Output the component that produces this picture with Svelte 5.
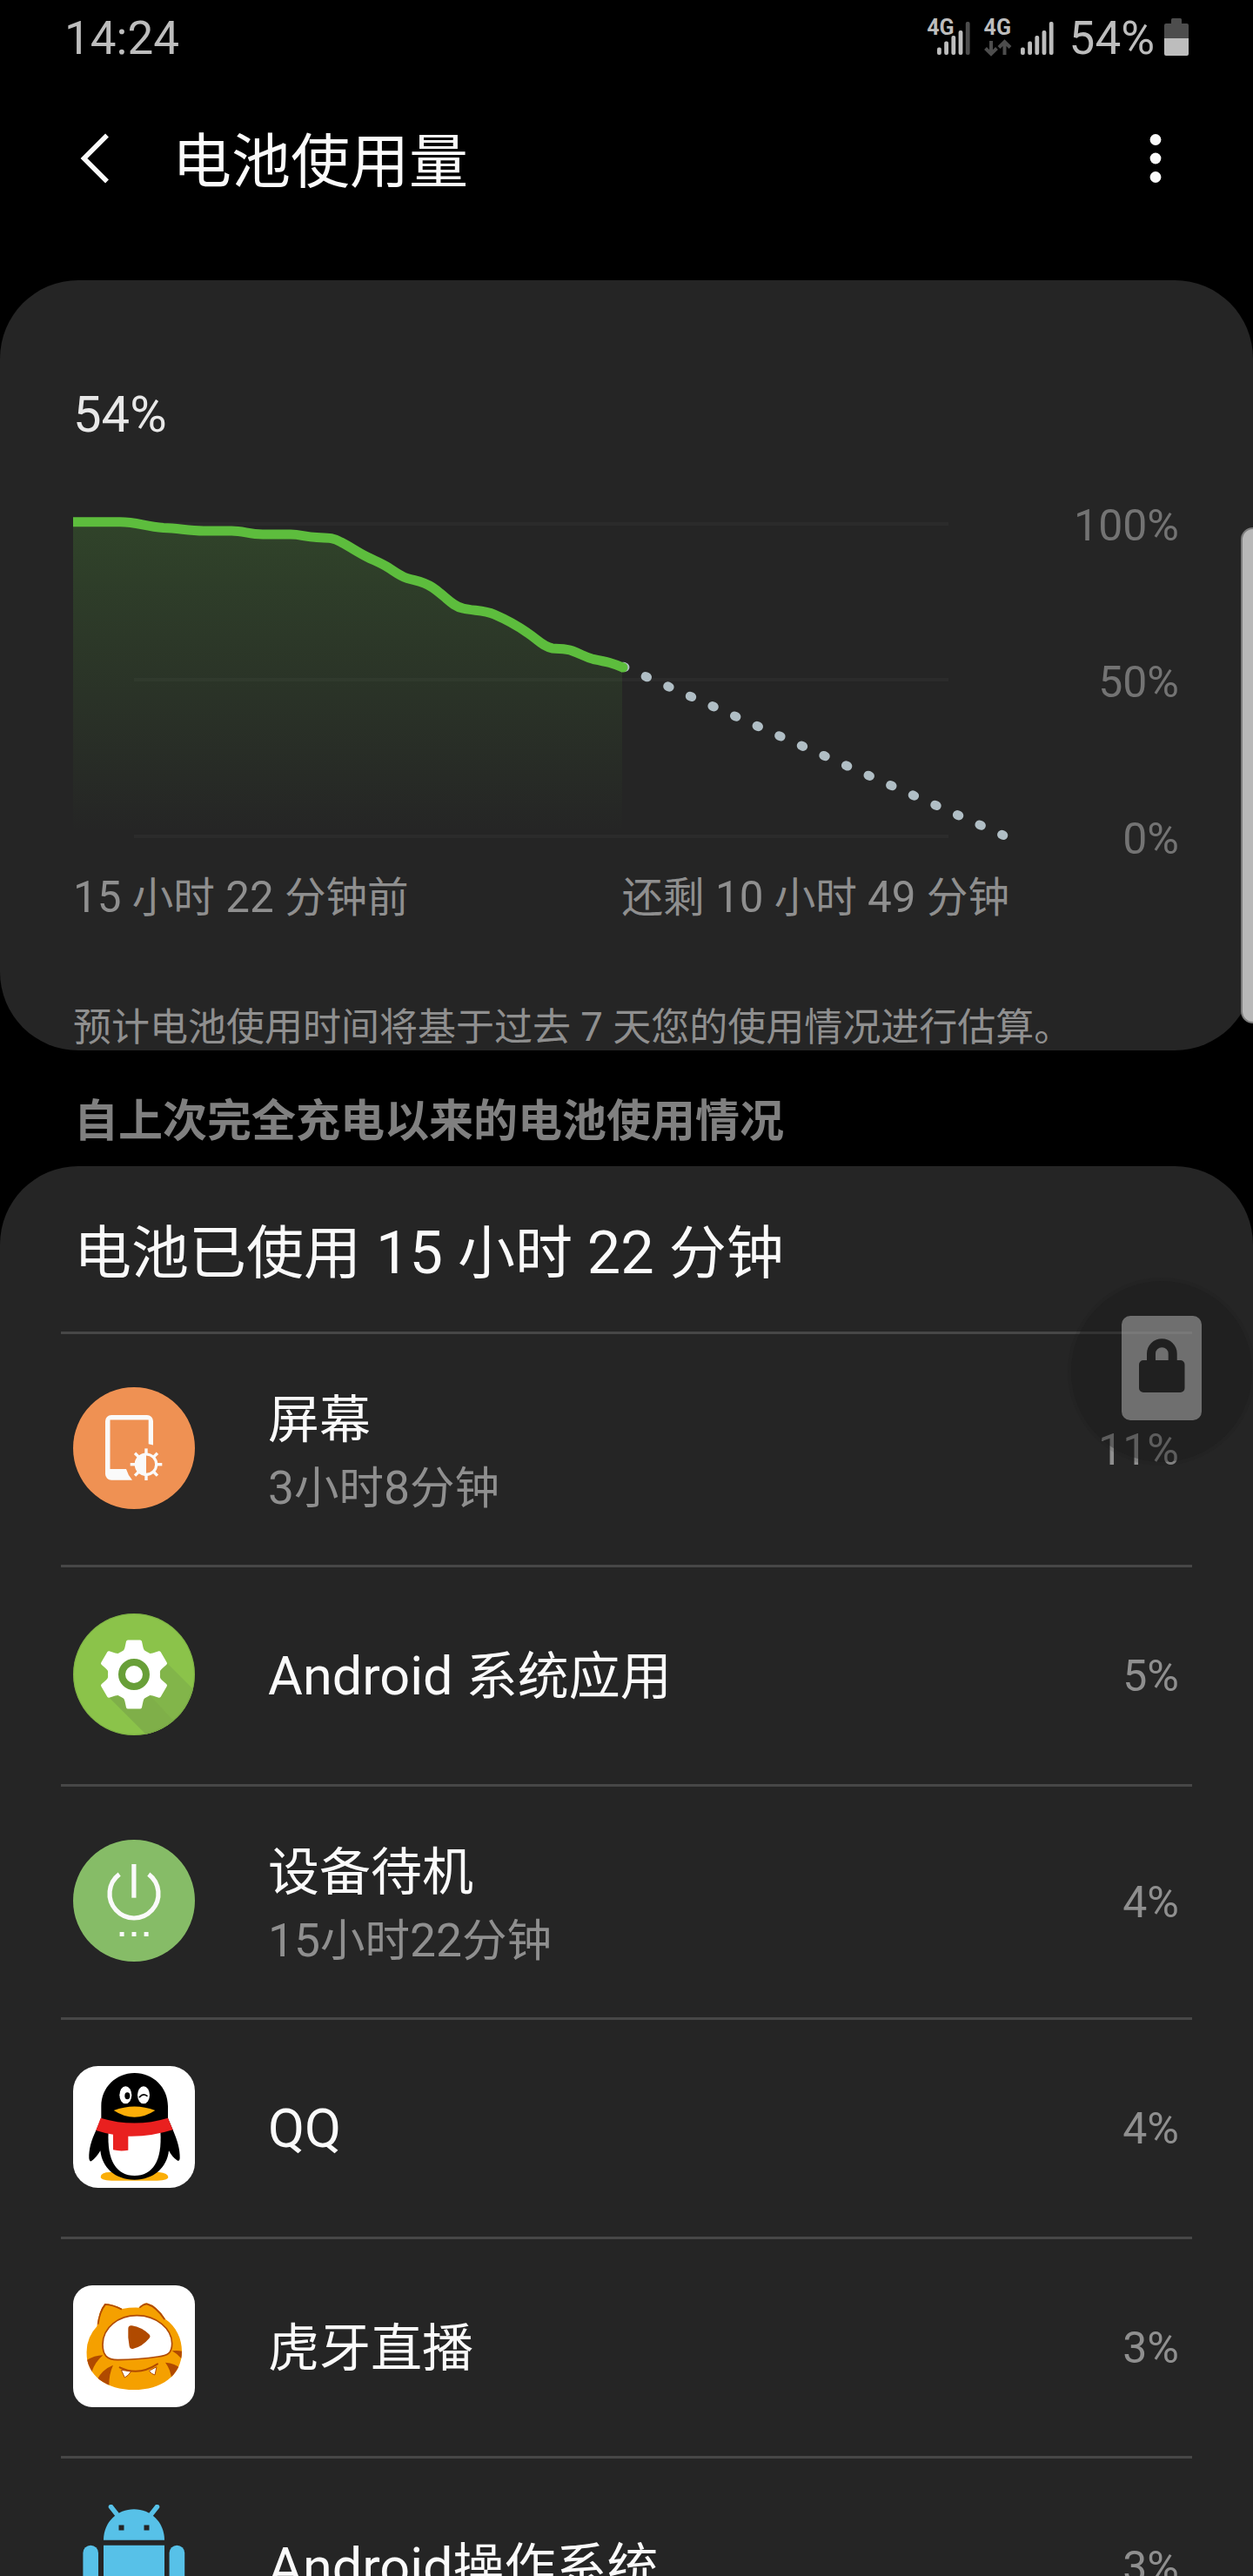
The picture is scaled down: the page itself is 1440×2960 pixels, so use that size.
<script>
  const usage = [
    { icon: 'screen', name: '屏幕', time: '3小时8分钟', percent: '11%' },
    { icon: 'gear', name: 'Android 系统应用', percent: '5%' },
    { icon: 'power', name: '设备待机', time: '15小时22分钟', percent: '4%' },
    { icon: 'qq', name: 'QQ', percent: '4%' },
    { icon: 'huya', name: '虎牙直播', percent: '3%' },
    { icon: 'android', name: 'Android操作系统', percent: '3%' }
  ];

  const curve =
    'M84 599.7 H138 C158 599.7 166 605 188 606.5 C206 607 216 610 234 610 H266 C280 610 286 614 302 614 H334 C346 614 350 617 364 617.5 C378 618 382 617.5 392 623 C402 628 410 634 422 640 C430 644 438 647 446 652 C454 657 460 662 468 664.5 C480 668 486 668 497 675 C512 685 520 697 532 699 C544 702 556 701 568 706 C582 712 596 720 606 727 C618 735 624 743 635 745 C644 746 650 745 658 748 C668 751.5 672 755 682 757.5 C698 760.5 704 762 717 767.5';

  const bars = [8.5, 15.5, 22, 28, 38];
  const teeth = [0, 60, 120, 180, 240, 300];
  const rays = [0, 45, 90, 135, 180, 225, 270, 315];

  // latin runs are set a little larger than the chinese around them
  const split = (text) => text.split(/([ -~]+)/).filter(Boolean);
  const isLatin = (part) => /^[ -~]/.test(part);
</script>

{#snippet mixed(text)}{#each split(text) as part}{#if isLatin(part)}<span class="latin">{part}</span>{:else}{part}{/if}{/each}{/snippet}

{#snippet signal(dimLast)}
  <svg class="signal" width="38" height="40" viewBox="0 0 38 40">
    {#each bars as h, i}
      <rect
        x={i * 8.2}
        y={39 - h}
        width="4.8"
        height={h}
        rx="2"
        fill={dimLast && i === 4 ? '#4d4d4d' : '#bdbdbd'}
      />
    {/each}
  </svg>
{/snippet}

{#snippet appIcon(name)}
  {#if name === 'screen'}
    <svg class="icon" viewBox="0 0 140 140">
      <circle cx="70" cy="70" r="70" fill="#ef9153" />
      <path
        d="M92 66.5 V39 a7 7 0 0 0 -7 -7 H44 a7 7 0 0 0 -7 7 V99.7 a7 7 0 0 0 7 7 H68 Q63 101 61 94 H42.5 V37.5 H86.7 V65.3 Z"
        fill="#fafafa"
      />
      <circle cx="84" cy="88.7" r="11.7" fill="none" stroke="#fafafa" stroke-width="3.2" />
      <path d="M84 76 A12.7 12.7 0 0 0 84 101.4 Z" fill="#fafafa" />
      {#each rays as a}
        <rect x="82.3" y="70.4" width="3.4" height="6.5" fill="#fafafa" transform="rotate({a} 84 88.7)" />
      {/each}
    </svg>
  {:else if name === 'gear'}
    <svg class="icon" viewBox="0 0 140 140">
      <defs>
        <clipPath id="gear-clip"><circle cx="70" cy="70" r="70" /></clipPath>
      </defs>
      <circle cx="70" cy="70" r="70" fill="#8bc34a" />
      <g clip-path="url(#gear-clip)">
        <path d="M41 96 L90 145 H150 V99 L107 56 L70 70 Z" fill="#82b54a" />
        <path d="M41 96 L90 145 H136 L88 94 Z" fill="#7faf49" />
      </g>
      <circle cx="70" cy="70" r="69.3" fill="none" stroke="#6b9a3c" stroke-opacity="0.4" stroke-width="1" />
      <circle cx="70" cy="70" r="30" fill="#fff" />
      {#each teeth as a}
        <path
          d="M53 46 Q58.5 44 59.5 39 L61 32 Q61.5 30.5 63 30.5 H77 Q78.5 30.5 79 32 L80.5 39 Q81.5 44 87 46 L80 56 H60 Z"
          fill="#fff"
          transform="rotate({a} 70 70)"
        />
      {/each}
      <circle cx="70" cy="70" r="14" fill="#fff" stroke="#689f38" stroke-width="8" />
    </svg>
  {:else if name === 'power'}
    <svg class="icon" viewBox="0 0 140 140">
      <circle cx="70" cy="70" r="70" fill="#86bc67" />
      <path d="M53.2 39.6 A28 28 0 1 0 86.8 39.6" fill="none" stroke="#fafafa" stroke-width="5.2" />
      <path d="M67.3 28 h5.2 v38.7 h-5.2 Z" fill="#fafafa" />
      <path d="M53.6 106 h5 v5 h-5 Z M67.5 106 h5 v5 h-5 Z M81.6 106 h5 v5 h-5 Z" fill="#fafafa" />
    </svg>
  {:else if name === 'qq'}
    <svg class="icon" viewBox="42 42 420 420">
      <rect x="42" y="42" width="420" height="420" rx="86" fill="#fff" />
      <path d="M137 425 Q137 408 170 408 H338 Q370 412 370 425 Q368 437 320 437 H185 Q140 437 137 425 Z" fill="#fbae08" />
      <path
        d="M254 66 C190 66 139 116 139 180 V222 L122 262 C104 300 96 330 97 360 Q99 374 106 369 Q122 358 136 334 C142 392 186 434 254 434 C320 434 366 392 372 334 Q384 356 400 367 Q409 374 410 360 C411 330 402 300 386 262 L369 222 V180 C369 116 318 66 254 66 Z"
        fill="#000"
      />
      <path d="M164 268 C158 370 192 420 254 420 C316 420 350 370 343 268 Z" fill="#fff" />
      <path
        d="M137 221 Q254 256 369 221 L386 262 Q310 286 232 284 V332 Q206 337 180 331 V278 Q148 273 121 264 Z"
        fill="#e9201f"
      />
      <ellipse cx="223" cy="142" rx="21" ry="30" fill="#fff" />
      <ellipse cx="285" cy="142" rx="21" ry="30" fill="#fff" />
      <ellipse cx="229" cy="145" rx="9" ry="12" fill="#000" />
      <path d="M271 149 Q283 134 297 145" fill="none" stroke="#000" stroke-width="5" stroke-linecap="round" />
      <path d="M182 195 Q254 168 325 195 Q254 242 182 195 Z" fill="#fbae08" />
    </svg>
  {:else if name === 'huya'}
    <svg class="icon" viewBox="42 48 420 420">
      <defs>
        <clipPath id="huya-face">
          <path
            d="M124 190 Q131 135 151 111 Q180 112 212 129 Q240 124 268 125 Q282 111 296 109 Q330 118 360 164 C398 190 417 232 417 275 C417 360 345 408 252 408 C158 408 88 360 88 278 Q90 225 124 190 Z"
          />
        </clipPath>
      </defs>
      <rect x="42" y="48" width="420" height="420" rx="66" fill="#fff" />
      <g clip-path="url(#huya-face)">
        <rect x="80" y="100" width="345" height="315" fill="#f5a000" />
        <path d="M127 182 Q132 138 153 113 Q178 114 210 130" fill="none" stroke="#b04a00" stroke-width="7" />
        <path d="M270 124 Q282 112 296 111 Q330 121 359 165" fill="none" stroke="#b04a00" stroke-width="8" />
        <path d="M86 307 Q115 290 145 289 Q118 312 107 345 L86 340 Z" fill="#b04a00" />
        <path d="M124 374 Q142 338 180 323 Q165 355 166 395 L130 390 Z" fill="#b04a00" />
        <path d="M383 274 Q405 271 420 276 V306 Q405 286 383 274 Z" fill="#b04a00" />
        <path d="M360 314 Q395 317 412 334 L382 372 Q378 338 360 314 Z" fill="#b04a00" />
      </g>
      <path
        d="M144 252 C144 192 200 152 262 152 C330 152 382 198 383 248 C383 282 368 290 335 294 Q270 304 196 305 C158 305 144 288 144 252 Z"
        fill="#fff"
        stroke="#b04a00"
        stroke-width="5"
      />
      <path d="M232 198 Q232 185 245 187 Q278 192 304 217 Q311 224 304 231 Q280 260 248 267 Q238 268 236 258 Q230 228 232 198 Z" fill="#b04a00" />
      <path d="M208 340 L220 366 Q232 360 242 345 Z M304 343 Q312 354 324 357 L330 329 Z" fill="#fff" stroke="#b04a00" stroke-width="3" />
      <path d="M203 331 Q268 362 333 319" fill="none" stroke="#b04a00" stroke-width="6" stroke-linecap="round" />
    </svg>
  {:else}
    <svg class="icon" viewBox="0 0 140 140">
      <g fill="#57c1e8">
        <path d="M35 40.7 C35 20 51 5.3 70 5.3 C89 5.3 105 20 105 40.7 Z" />
        <path d="M35 46.7 H105 V106 H93 V136 H77 V106 H63 V136 H47 V106 H35 Z" />
        <rect x="11.4" y="46.7" width="17.6" height="56" rx="8.8" />
        <rect x="110.6" y="46.7" width="17.6" height="56" rx="8.8" />
      </g>
      <path d="M43.5 2.5 L51 12 M96.5 2.5 L89 12" stroke="#57c1e8" stroke-width="5.5" stroke-linecap="round" />
      <path d="M52.5 23.5 h6 v6 h-6 Z M81.5 23.5 h6 v6 h-6 Z" fill="#252525" />
    </svg>
  {/if}
{/snippet}

<div class="screen">
  <div class="status">
    <span class="clock">14:24</span>
    <div class="status-right">
      <div class="network overlap">
        <span>4G</span>
        {@render signal(true)}
      </div>
      <div class="network">
        <div class="data">
          <span>4G</span>
          <svg width="32" height="20" viewBox="0 0 32 20" fill="none" stroke="#4d4d4d" stroke-width="4">
            <path d="M8 2 V17 M1.5 10.5 L8 17 L14.5 10.5 M23.5 18 V3 M17 9.5 L23.5 3 L30 9.5" />
          </svg>
        </div>
        {@render signal(false)}
      </div>
      <span class="level">54%</span>
      <svg class="battery" width="28" height="44" viewBox="0 0 28 44">
        <path d="M8 1.5 Q8 0 9.5 0 H18.5 Q20 0 20 1.5 V6 H26 Q28 6 28 8 V23 H0 V8 Q0 6 2 6 H8 Z" fill="#4d4d4d" />
        <path d="M0 23 H28 V41 Q28 43 26 43 H2 Q0 43 0 41 Z" fill="#bdbdbd" />
      </svg>
    </div>
  </div>

  <header>
    <svg class="back" width="34" height="58" viewBox="0 0 34 58">
      <path d="M31 2.5 L4.5 29 L31 55.5" fill="none" stroke="#fafafa" stroke-width="5.5" />
    </svg>
    <h1>电池使用量</h1>
    <svg class="more" width="14" height="58" viewBox="0 0 14 58" fill="#fafafa">
      <circle cx="7" cy="7.5" r="6.4" />
      <circle cx="7" cy="29" r="6.4" />
      <circle cx="7" cy="50.5" r="6.4" />
    </svg>
  </header>

  <section class="card chart-card">
    <p class="current">54%</p>
    <div class="chart">
      <svg width="1080" height="420" viewBox="84 574 1080 420">
        <defs>
          <linearGradient id="fade" x1="0" y1="600" x2="0" y2="958" gradientUnits="userSpaceOnUse">
            <stop offset="0" stop-color="#5dbd3d" stop-opacity="0.2" />
            <stop offset="1" stop-color="#5dbd3d" stop-opacity="0" />
          </linearGradient>
        </defs>
        <path d="M154 600 H1090 V604 H154 Z M154 779 H1090 V783 H154 Z M154 959 H1090 V963 H154 Z" fill="#2b2b2b" />
        <path d="{curve} L715 768 V958 H84 Z" fill="url(#fade)" />
        <path
          d="M715.4 765.5 L1153 959.8"
          fill="none"
          stroke="#b0bec5"
          stroke-width="10.5"
          stroke-linecap="round"
          stroke-dasharray="2 26"
          stroke-dashoffset="-1"
        />
        <path d={curve} fill="none" stroke="#5dbd3d" stroke-width="11" />
        <circle cx="716" cy="767" r="5.5" fill="#5dbd3d" />
      </svg>
      <div class="scale">
        <span>100%</span>
        <span>50%</span>
        <span>0%</span>
      </div>
    </div>
    <div class="range">
      <span>{@render mixed('15 小时 22 分钟前')}</span>
      <span>{@render mixed('还剩 10 小时 49 分钟')}</span>
    </div>
    <p class="note">{@render mixed('预计电池使用时间将基于过去 7 天您的使用情况进行估算。')}</p>
  </section>

  <h2>自上次完全充电以来的电池使用情况</h2>

  <section class="card list-card">
    <h3>{@render mixed('电池已使用 15 小时 22 分钟')}</h3>
    <ul>
      {#each usage as item}
        <li class:tall={item.time}>
          {@render appIcon(item.icon)}
          <div class="label">
            <span class="name">{@render mixed(item.name)}</span>
            {#if item.time}
              <span class="time">{@render mixed(item.time)}</span>
            {/if}
          </div>
          <span class="percent">{item.percent}</span>
        </li>
      {/each}
    </ul>
  </section>

  <div class="edge-handle"></div>

  <svg class="lock" width="220" height="220" viewBox="1225 1466 220 220">
    <circle cx="1335" cy="1576" r="108" fill="#1b1b1b" fill-opacity="0.12" />
    <circle cx="1335" cy="1576" r="104" fill="#1b1b1b" fill-opacity="0.34" />
    <path
      fill-rule="evenodd"
      fill="#bebebe"
      fill-opacity="0.5"
      d="M1299 1512 H1371 a10 10 0 0 1 10 10 V1622 a10 10 0 0 1 -10 10 H1299 a10 10 0 0 1 -10 -10 V1522 a10 10 0 0 1 10 -10 Z
         M1318 1563 H1314 a5 5 0 0 0 -5 5 V1595 a5 5 0 0 0 5 5 H1356.5 a5 5 0 0 0 5 -5 V1568 a5 5 0 0 0 -5 -5 H1352.7 V1555.5 a17.35 17.35 0 0 0 -34.7 0 Z
         M1328 1563 V1555.5 a7.35 7.35 0 0 1 14.7 0 V1563 Z"
    />
  </svg>
</div>

<style>
  :global(body) {
    background: #000;
  }

  .screen {
    position: relative;
    width: 1440px;
    height: 2960px;
    overflow: hidden;
    background: #000;
    color: #fafafa;
    font-family: Roboto, 'Noto Sans CJK SC', sans-serif;
  }

  h1,
  h2,
  h3,
  p,
  ul {
    margin: 0;
    padding: 0;
    font-weight: 400;
  }

  svg {
    display: block;
    flex-shrink: 0;
  }

  .latin {
    font-size: 1.037em;
  }

  .status {
    display: flex;
    justify-content: space-between;
    align-items: center;
    height: 86px;
    padding: 0 74px;
    color: #bdbdbd;
    font-size: 53px;
    line-height: 86px;
  }

  .clock,
  .level {
    padding-top: 2px;
  }

  .status-right {
    display: flex;
    align-items: center;
  }

  .network {
    display: flex;
    align-items: flex-start;
    height: 42px;
    margin-right: 18px;
    font-size: 25px;
    font-weight: 700;
    line-height: 19px;
  }

  .network.overlap {
    margin-right: 16px;
  }

  .network.overlap .signal {
    margin-left: -20px;
  }

  .data {
    display: flex;
    flex-direction: column;
    gap: 4px;
    margin-right: 10px;
  }

  .network .signal {
    margin-top: 2px;
  }

  .level {
    margin-right: 11px;
  }

  header {
    display: flex;
    align-items: center;
    height: 192px;
    margin-bottom: 44px;
    padding: 0 105px 0 92px;
  }

  h1 {
    flex: 1;
    margin-left: 72px;
    padding-top: 10px;
    font-size: 68px;
    line-height: 90px;
  }

  .card {
    background: #252525;
  }

  .chart-card {
    height: 885px;
    box-sizing: border-box;
    padding: 121px 85px 0 84px;
    border-radius: 90px;
  }

  .current {
    margin-bottom: 65px;
    color: #e8e8e8;
    font-size: 58px;
    line-height: 66px;
  }

  .chart {
    display: flex;
    justify-content: space-between;
  }

  .scale {
    display: flex;
    flex-direction: column;
    justify-content: space-between;
    align-items: flex-end;
    color: #737373;
    font-size: 50px;
    line-height: 60px;
  }

  .range {
    display: flex;
    justify-content: space-between;
    width: 1076px;
    margin-top: 7px;
    color: #8f8f8f;
    font-size: 47.6px;
    line-height: 60px;
  }

  .note {
    margin-top: 92px;
    color: #8f8f8f;
    font-size: 44px;
    line-height: 54px;
  }

  h2 {
    height: 82px;
    padding: 51px 84px 0 85px;
    color: #808080;
    font-size: 51px;
    font-weight: 700;
    line-height: 62px;
  }

  .list-card {
    border-radius: 90px 90px 0 0;
  }

  h3 {
    height: 130px;
    padding: 60px 84px 0 85px;
    font-size: 66px;
    line-height: 80px;
  }

  ul {
    margin: 0 70px;
    list-style: none;
  }

  li {
    display: flex;
    align-items: center;
    height: 252px;
    box-sizing: border-box;
    padding: 0 15px 3px 14px;
    border-top: 3px solid #474747;
  }

  li.tall {
    height: 268px;
  }

  .icon {
    width: 140px;
    height: 140px;
  }

  .label {
    display: flex;
    flex: 1;
    flex-direction: column;
    margin-left: 84px;
    padding-top: 5px;
  }

  .tall .label {
    padding-top: 8px;
  }

  .name {
    font-size: 59px;
    line-height: 80px;
  }

  .time {
    margin: 2px 0 -2px;
    color: #8f8f8f;
    font-size: 51.5px;
    line-height: 72px;
  }

  .percent {
    padding-top: 3px;
    color: #8f8f8f;
    font-size: 50px;
  }

  .edge-handle {
    position: absolute;
    top: 606px;
    right: -16px;
    width: 26px;
    height: 566px;
    border: 2px solid #7c7c7c;
    border-radius: 14px;
    background: #b8b8b8;
  }

  .lock {
    position: absolute;
    top: 1466px;
    left: 1225px;
  }
</style>
